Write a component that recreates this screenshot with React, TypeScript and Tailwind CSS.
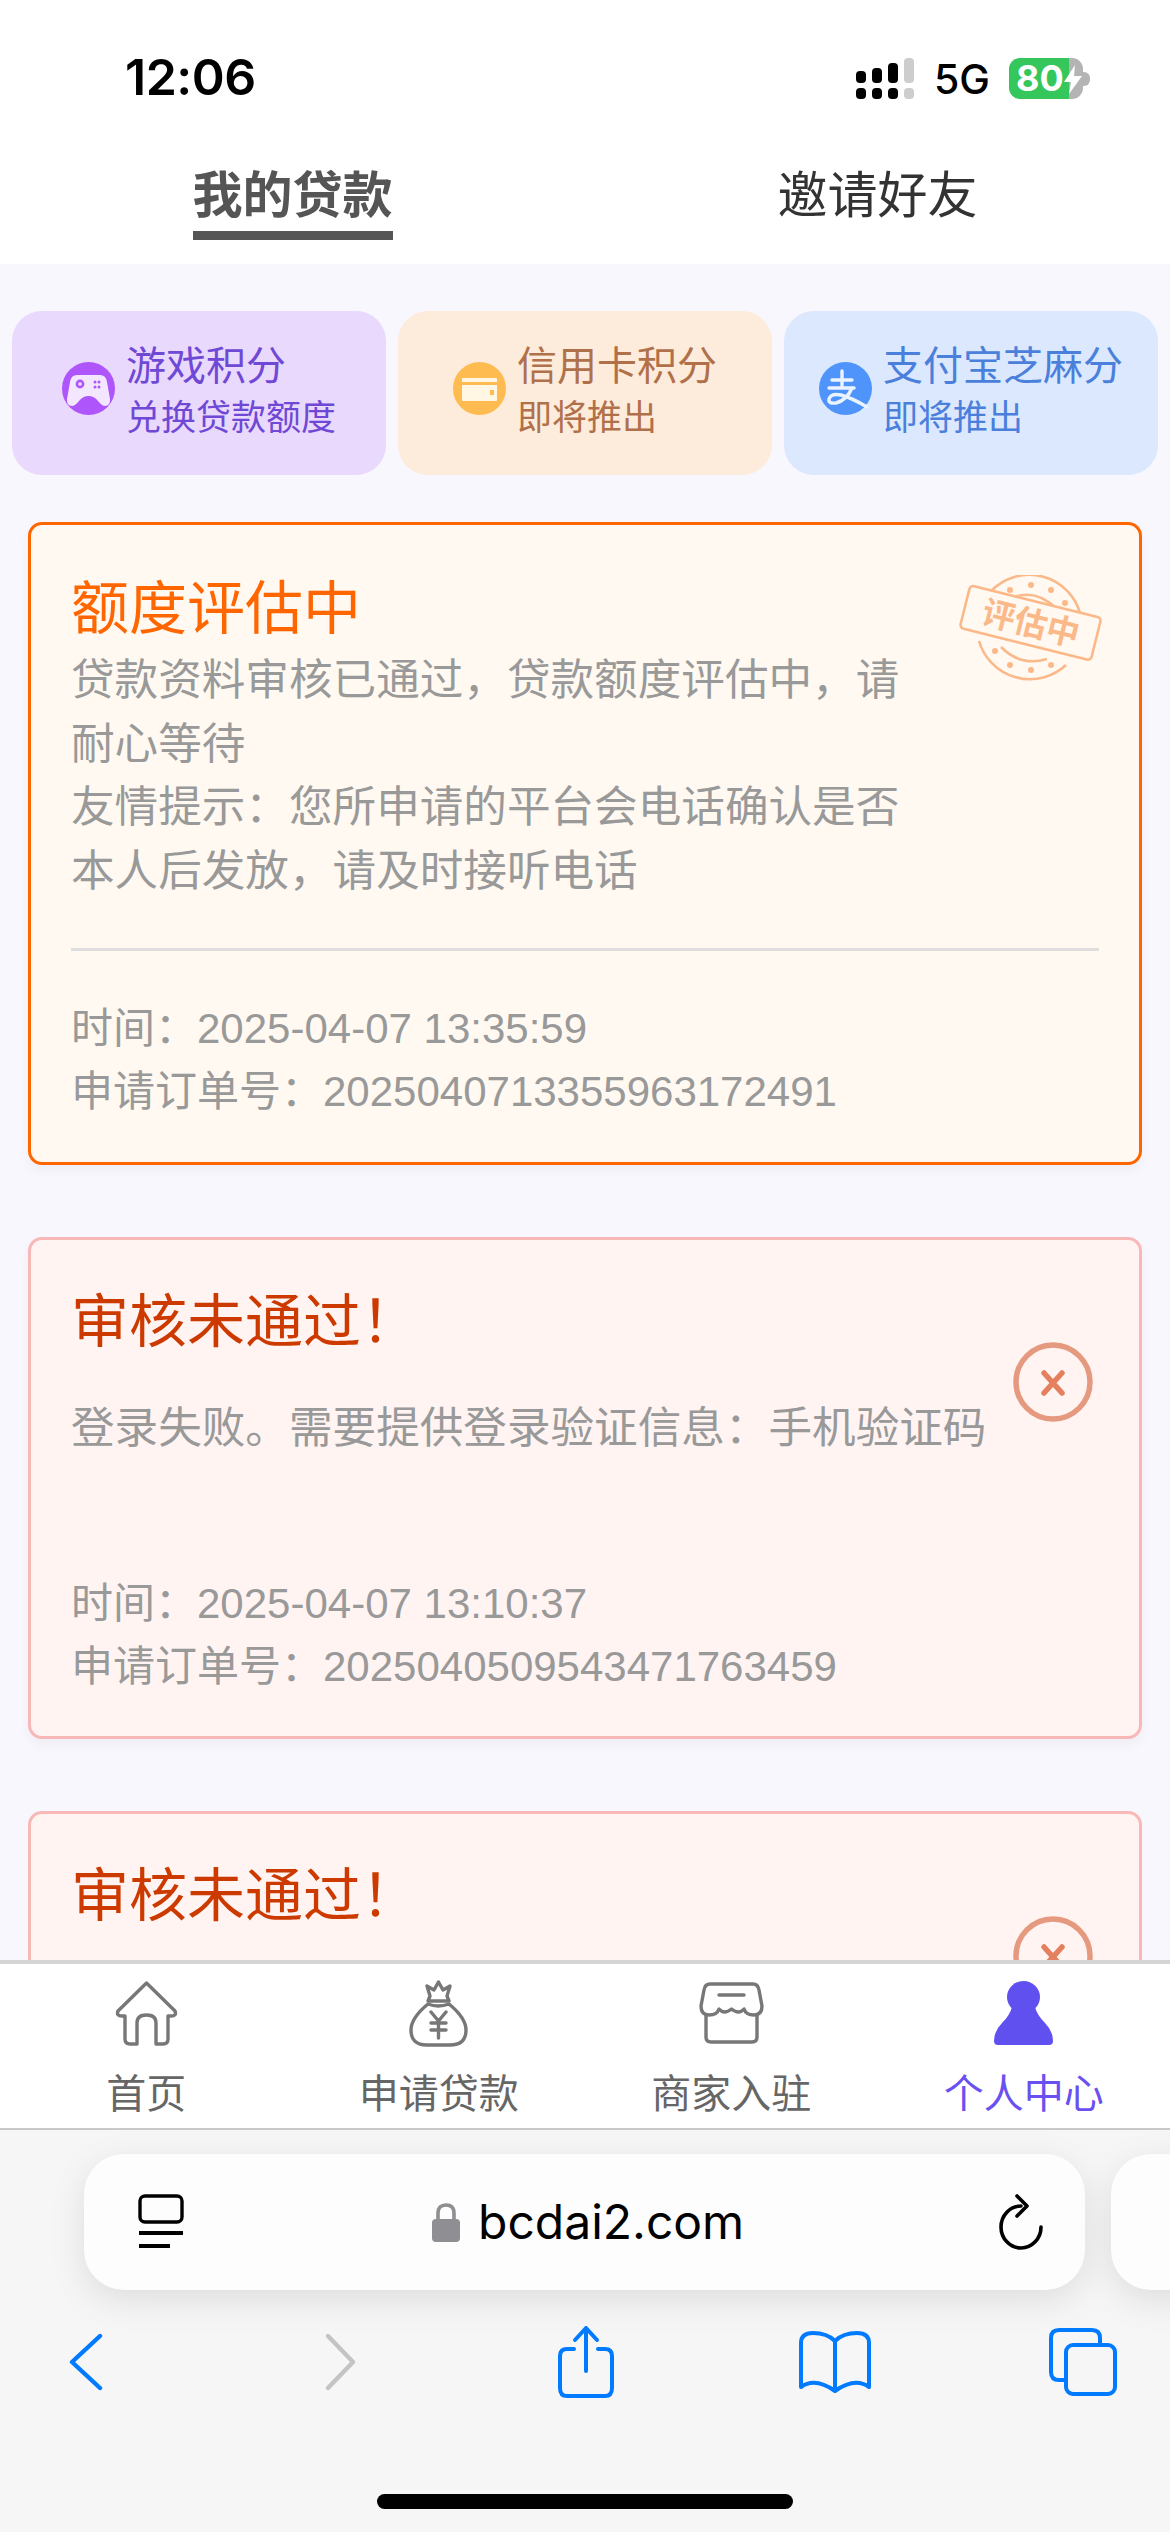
import React from "react";

function Signal() {
  return (
    <svg width="58" height="41" viewBox="0 0 58 41">
      <g fill="#000">
        <rect x="0" y="13" width="10" height="12" rx="4" />
        <rect x="16" y="10" width="10" height="15" rx="4" />
        <rect x="32" y="5" width="10" height="20" rx="4" />
        <rect x="0" y="30" width="10" height="11" rx="4" />
        <rect x="16" y="30" width="10" height="11" rx="4" />
        <rect x="32" y="30" width="10" height="11" rx="4" />
      </g>
      <g fill="#cdcdcd">
        <rect x="48" y="0" width="10" height="25" rx="4" />
        <rect x="48" y="30" width="10" height="11" rx="4" />
      </g>
    </svg>
  );
}

function Battery() {
  return (
    <div className="relative flex h-[41px] w-[82px] items-center">
      <div className="flex h-[41px] w-[74px] overflow-hidden rounded-[11px]">
        <div className="h-full w-[60px] bg-[#36c75c]" />
        <div className="h-full w-[14px] bg-[#b4b4b4]" />
      </div>
      <div className="h-[14px] w-[7px] rounded-r-[6px] bg-[#b4b4b4]" />
      <span className="absolute left-[7px] top-0 text-[36px] leading-[41px] font-bold text-white font-['Inter',sans-serif]">80</span>
      <svg className="absolute left-[55px] top-[7px]" width="18" height="29" viewBox="0 0 18 29">
        <path d="M11 0 L0 17 H7 L5 29 L18 11 H10 Z" fill="#fff" />
      </svg>
    </div>
  );
}

function GameIcon() {
  return (
    <svg width="53" height="53" viewBox="0 0 53 53" className="shrink-0">
      <circle cx="26.5" cy="26.5" r="26.5" fill="#ae55fb" />
      <path d="M15 13 H38 Q44 13 45 20 L48 37 Q48.5 44 43 44 Q40 44 36 39 Q32 34 26.5 34 Q21 34 17 39 Q13 44 10 44 Q4.5 44 5 37 L8 20 Q9 13 15 13 Z" fill="#f3e6ff" />
      <circle cx="18" cy="22" r="4.4" fill="#ae55fb" />
      <circle cx="18" cy="22" r="1.8" fill="#f3e6ff" />
      <circle cx="33" cy="20" r="1.5" fill="#ae55fb" />
      <circle cx="37" cy="20" r="1.5" fill="#ae55fb" />
      <circle cx="33" cy="25" r="1.5" fill="#ae55fb" />
      <circle cx="37" cy="25" r="1.5" fill="#ae55fb" />
    </svg>
  );
}

function CardIcon() {
  return (
    <svg width="53" height="53" viewBox="0 0 53 53" className="shrink-0">
      <circle cx="26.5" cy="26.5" r="26.5" fill="#febc50" />
      <rect x="9" y="16" width="35" height="23" rx="1" fill="#fff6e4" />
      <rect x="9" y="20" width="35" height="3" fill="#febc50" />
      <rect x="37" y="28" width="4" height="5" fill="#febc50" />
    </svg>
  );
}

function AlipayIcon() {
  return (
    <svg width="53" height="53" viewBox="0 0 53 53" className="shrink-0">
      <circle cx="26.5" cy="26.5" r="26.5" fill="#4f94fb" />
      <g fill="none" stroke="#eaf3ff" strokeWidth="3.4" strokeLinecap="round">
        <path d="M13 18 H33" />
        <path d="M23 9 V25" />
        <path d="M10 26 H35" />
        <path d="M33 26 Q28 38 17 41 Q9 42 10 37 Q12 31 22 33 Q33 36 48 45" />
      </g>
    </svg>
  );
}

function Chip({ bg, color, icon, title, sub }: { bg: string; color: string; icon: React.ReactNode; title: string; sub: string }) {
  return (
    <div className={`flex h-[164px] w-[374px] items-center justify-center gap-[11px] rounded-[30px] ${bg} ${color}`}>
      <div className="-mt-[10px]">{icon}</div>
      <div className="-mt-[3px]">
        <div className="text-[40px] leading-[52px]">{title}</div>
        <div className="text-[35px] leading-[52px]">{sub}</div>
      </div>
    </div>
  );
}

function Stamp() {
  return (
    <svg className="absolute left-[928px] top-[50px]" width="144" height="108" viewBox="0 0 144 108">
      <g fill="none" stroke="#fbb98a" strokeWidth="2.6">
        <path d="M33 15 A53 53 0 0 1 121 38" />
        <path d="M20 66 A53 53 0 0 0 107 90" />
        <path d="M55 22 Q78 14 98 34" />
        <path d="M42 72 Q62 92 88 84" />
        <rect x="4" y="26" width="135" height="44" rx="4" transform="rotate(14 72 48)" fill="#fff9f1" />
      </g>
      <g fill="#fbb98a">
        <circle cx="51" cy="15" r="3" /><circle cx="72" cy="10" r="3" /><circle cx="92" cy="15" r="3" /><circle cx="106" cy="28" r="3" />
        <circle cx="36" cy="76" r="3" /><circle cx="51" cy="90" r="3" /><circle cx="72" cy="95" r="3" /><circle cx="92" cy="90" r="3" />
      </g>
      <text x="72" y="60" textAnchor="middle" fontSize="33" fontWeight="700" fill="#fbb98a" transform="rotate(14 72 48)">评估中</text>
    </svg>
  );
}

function FailIcon() {
  return (
    <svg className="absolute left-[982px] top-[102px]" width="80" height="80" viewBox="0 0 80 80">
      <circle cx="40" cy="40" r="37" fill="none" stroke="#e59a80" strokeWidth="5.5" />
      <path d="M31 31 L49 51 M49 31 L31 51" stroke="#e5805f" strokeWidth="5.5" strokeLinecap="round" />
    </svg>
  );
}

function Meta({ time, order }: { time: string; order: string }) {
  return (
    <div className="text-[42px] leading-[63px] text-[#999999]">
      <div>时间：{time}</div>
      <div className="whitespace-nowrap">申请订单号：{order}</div>
    </div>
  );
}

function FailCard({ time, order }: { time: string; order: string }) {
  return (
    <div className="relative mt-[72px] rounded-[14px] border-[3px] border-[#f9b8b8] bg-[#fff4f2] pt-[42px] pr-[40px] pb-[38px] pl-[40px] shadow-[0_6px_12px_rgba(0,0,0,0.04)]">
      <div className="text-[58px] leading-[80px] text-[#cc3a00]">审核未通过！</div>
      <FailIcon />
      <div className="mt-[34px] whitespace-nowrap text-[43.6px] leading-[64px] text-[#999999]">登录失败。需要提供登录验证信息：手机验证码</div>
      <div className="mt-[112px]">
        <Meta time={time} order={order} />
      </div>
    </div>
  );
}

function PartialFailCard() {
  return (
    <div className="relative mt-[72px] h-[502px] rounded-[14px] border-[3px] border-[#f9b8b8] bg-[#fff4f2] pt-[42px] pl-[40px]">
      <div className="text-[58px] leading-[80px] text-[#cc3a00]">审核未通过！</div>
      <FailIcon />
    </div>
  );
}

function HomeIcon() {
  return (
    <svg width="65" height="65" viewBox="0 0 65 65" fill="none" stroke="#777" strokeWidth="3.4" strokeLinejoin="round">
      <path d="M32.5 2 L4 30 Q2 35 8 35 H11 V58 Q11 63 16 63 H23 V42 Q23 34 32.5 34 Q42 34 42 42 V63 H49 Q54 63 54 58 V35 H57 Q63 35 61 30 Z" />
    </svg>
  );
}

function BagIcon() {
  return (
    <svg width="65" height="67" viewBox="0 0 65 67" fill="none" stroke="#777" strokeWidth="3.4" strokeLinejoin="round" strokeLinecap="round">
      <path d="M24 16 L21 6 L28 10 L32.5 2 L37 10 L44 6 L41 16 L43 21 H22 Z" />
      <path d="M22 24 Q32 28 43 24 Q60 38 60 50 Q60 65 44 65 H21 Q5 65 5 50 Q5 38 22 24 Z" />
      <path d="M25 32 L32.5 41 L40 32 M25 43 H40 M25 50 H40 M32.5 41 V58" />
    </svg>
  );
}

function StoreIcon() {
  return (
    <svg width="65" height="62" viewBox="0 0 65 62" fill="none" stroke="#777" strokeWidth="3.4" strokeLinejoin="round" strokeLinecap="round">
      <path d="M11 2 H54 Q59 2 60 8 L63 24 Q63 33 55 33 Q47 33 45 27 Q40 33 32.5 27 Q25 33 20 27 Q18 33 10 33 Q2 33 2 24 L5 8 Q6 2 11 2 Z" />
      <path d="M7 33 V55 Q7 60 12 60 H53 Q58 60 58 55 V33" />
      <path d="M20 13 H45" />
    </svg>
  );
}

function PersonIcon() {
  return (
    <svg width="65" height="65" viewBox="0 0 65 65" fill="#6150f0">
      <ellipse cx="32.5" cy="16" rx="16.5" ry="16" />
      <path d="M21 26 H44 Q46 34 54 42 Q62 50 62 60 Q62 64 58 64 H7 Q3 64 3 60 Q3 50 11 42 Q19 34 21 26 Z" />
    </svg>
  );
}

function TabItem({ icon, label, active }: { icon: React.ReactNode; label: string; active?: boolean }) {
  return (
    <div className="flex flex-col items-center">
      <div className="flex h-[66px] items-center justify-center">{icon}</div>
      <div className={`mt-[20px] text-[40px] leading-[56px] ${active ? "text-[#6a50f0]" : "text-[#666666]"}`}>{label}</div>
    </div>
  );
}

export default function App() {
  return (
    <div className="flex h-[2532px] w-[1170px] flex-col overflow-hidden bg-white font-['Liberation_Sans','Noto_Sans_CJK_SC',sans-serif]">
      <header className="shrink-0 bg-white">
        <div className="flex h-[165px] items-start pt-[57px] pr-[79px] pl-[125px]">
          <div className="text-[50px] leading-[40px] font-semibold tracking-[-0.5px] text-black font-['Inter',sans-serif]">12:06</div>
          <div className="ml-auto flex items-center">
            <Signal />
            <span className="ml-[20px] mt-[2px] text-[41px] leading-[41px] font-medium text-black font-['Inter',sans-serif]">5G</span>
            <div className="ml-[19px]"><Battery /></div>
          </div>
        </div>
        <div className="grid h-[99px] grid-cols-2">
          <div className="flex flex-col items-center">
            <div className="border-b-[9px] border-[#555555] pt-[1px] pb-[5px] text-[50px] leading-[60px] font-bold text-[#555555]">我的贷款</div>
          </div>
          <div className="flex flex-col items-center">
            <div className="pt-[1px] text-[50px] leading-[60px] text-[#333333]">邀请好友</div>
          </div>
        </div>
      </header>

      <main className="min-h-0 flex-1 overflow-hidden bg-[#f7f7fd]">
        <div className="flex justify-between px-[12px] pt-[47px]">
          <Chip bg="bg-[#e9d9fd]" color="text-[#7048d6]" icon={<GameIcon />} title="游戏积分" sub="兑换贷款额度" />
          <Chip bg="bg-[#fdebdc]" color="text-[#b0714a]" icon={<CardIcon />} title="信用卡积分" sub="即将推出" />
          <Chip bg="bg-[#dbe8fe]" color="text-[#4a7fdc]" icon={<AlipayIcon />} title="支付宝芝麻分" sub="即将推出" />
        </div>

        <div className="px-[28px] pt-[47px]">
          <div className="relative rounded-[14px] border-[3px] border-[#ff6600] bg-[#fff9f1] pt-[44px] pr-[40px] pb-[39px] pl-[40px] shadow-[0_6px_12px_rgba(0,0,0,0.04)]">
            <Stamp />
            <div className="text-[58px] leading-[80px] text-[#ff6600]">额度评估中</div>
            <div className="w-[840px] text-[43.6px] leading-[63.5px] text-[#999999]">
              <div>贷款资料审核已通过，贷款额度评估中，请耐心等待</div>
              <div>友情提示：您所申请的平台会电话确认是否本人后发放，请及时接听电话</div>
            </div>
            <div className="mt-[45px] mb-[46px] h-[3px] bg-[#dedede]" />
            <Meta time="2025-04-07 13:35:59" order="2025040713355963172491" />
          </div>

          <FailCard time="2025-04-07 13:10:37" order="2025040509543471763459" />
          <PartialFailCard />
        </div>
      </main>

      <nav className="grid h-[170px] shrink-0 grid-cols-4 border-t-[4px] border-b-[2px] border-t-[#d4d4d4] border-b-[#c8c8c8] bg-white pt-[16px]">
        <TabItem icon={<HomeIcon />} label="首页" />
        <TabItem icon={<BagIcon />} label="申请贷款" />
        <TabItem icon={<StoreIcon />} label="商家入驻" />
        <TabItem icon={<PersonIcon />} label="个人中心" active />
      </nav>

      <footer className="h-[402px] shrink-0 overflow-hidden bg-[#f6f6f6] pt-[24px]">
        <div className="flex gap-[26px] pl-[84px]">
          <div className="flex h-[136px] w-[1001px] shrink-0 items-center rounded-[40px] bg-[#fdfdfd] pr-[41px] pl-[54px] shadow-[0_10px_36px_rgba(0,0,0,0.10)]">
            <svg width="46" height="56" viewBox="0 0 46 56" fill="none" stroke="#000" className="shrink-0">
              <rect x="2" y="2" width="42" height="26" rx="5" strokeWidth="3.4" />
              <path d="M1 39 H45" strokeWidth="4" />
              <path d="M1 52 H32" strokeWidth="4" />
            </svg>
            <div className="ml-[248px] flex items-center">
              <svg width="28" height="39" viewBox="0 0 28 39">
                <path d="M6 18 V10 Q6 2 14 2 Q22 2 22 10 V18" fill="none" stroke="#8e8e93" strokeWidth="3.6" />
                <rect x="0" y="16" width="28" height="23" rx="4" fill="#8e8e93" />
              </svg>
              <span className="ml-[18px] text-[48px] leading-[60px] text-black font-['Inter',sans-serif]">bcdai2.com</span>
            </div>
            <svg className="ml-auto shrink-0" width="46" height="56" viewBox="0 0 46 56" fill="none" stroke="#000" strokeWidth="3.6" strokeLinecap="round" strokeLinejoin="round">
              <path d="M23 12 A20 21 0 1 0 43 33" />
              <path d="M19 2 L29 12 L19 22" />
            </svg>
          </div>
          <div className="h-[136px] w-[400px] shrink-0 rounded-[40px] bg-[#fdfdfd] shadow-[0_10px_36px_rgba(0,0,0,0.10)]" />
        </div>

        <div className="mt-[32px] flex h-[80px] items-center pl-[53px]">
          <svg className="shrink-0" width="66" height="58" viewBox="0 0 66 58" fill="none" stroke="#007aff" strokeWidth="4.4" strokeLinecap="round" strokeLinejoin="round">
            <path d="M47 3 L19 29 L47 55" />
          </svg>
          <svg className="ml-[182px] shrink-0" width="66" height="58" viewBox="0 0 66 58" fill="none" stroke="#c4c4c6" strokeWidth="4.4" strokeLinecap="round" strokeLinejoin="round">
            <path d="M27 3 L52 29 L27 55" />
          </svg>
          <svg className="ml-[186px] shrink-0" width="66" height="74" viewBox="0 0 66 74" fill="none" stroke="#007aff" strokeWidth="4" strokeLinecap="round" strokeLinejoin="round">
            <path d="M21 24 H14 Q7 24 7 31 V63 Q7 71 14 71 H52 Q59 71 59 63 V31 Q59 24 52 24 H45" />
            <path d="M33 46 V3 M22 15 L33 3 L44 15" />
          </svg>
          <svg className="ml-[180px] shrink-0" width="72" height="62" viewBox="0 0 72 62" fill="none" stroke="#007aff" strokeWidth="4" strokeLinejoin="round">
            <path d="M36 10 Q28 2 14 2 Q2 2 2 12 V56 Q16 46 36 60 Q56 46 70 56 V12 Q70 2 58 2 Q44 2 36 10 Z" />
            <path d="M36 10 V58" />
          </svg>
          <svg className="ml-[178px] shrink-0" width="68" height="68" viewBox="0 0 68 68" fill="none" stroke="#007aff" strokeWidth="4" strokeLinejoin="round">
            <path d="M51 17 V10 Q51 2 43 2 H10 Q2 2 2 10 V44 Q2 52 10 52 H16" />
            <rect x="17" y="17" width="49" height="49" rx="7" />
          </svg>
        </div>

        <div className="mx-auto mt-[92px] h-[15px] w-[416px] rounded-full bg-black" />
      </footer>
    </div>
  );
}
